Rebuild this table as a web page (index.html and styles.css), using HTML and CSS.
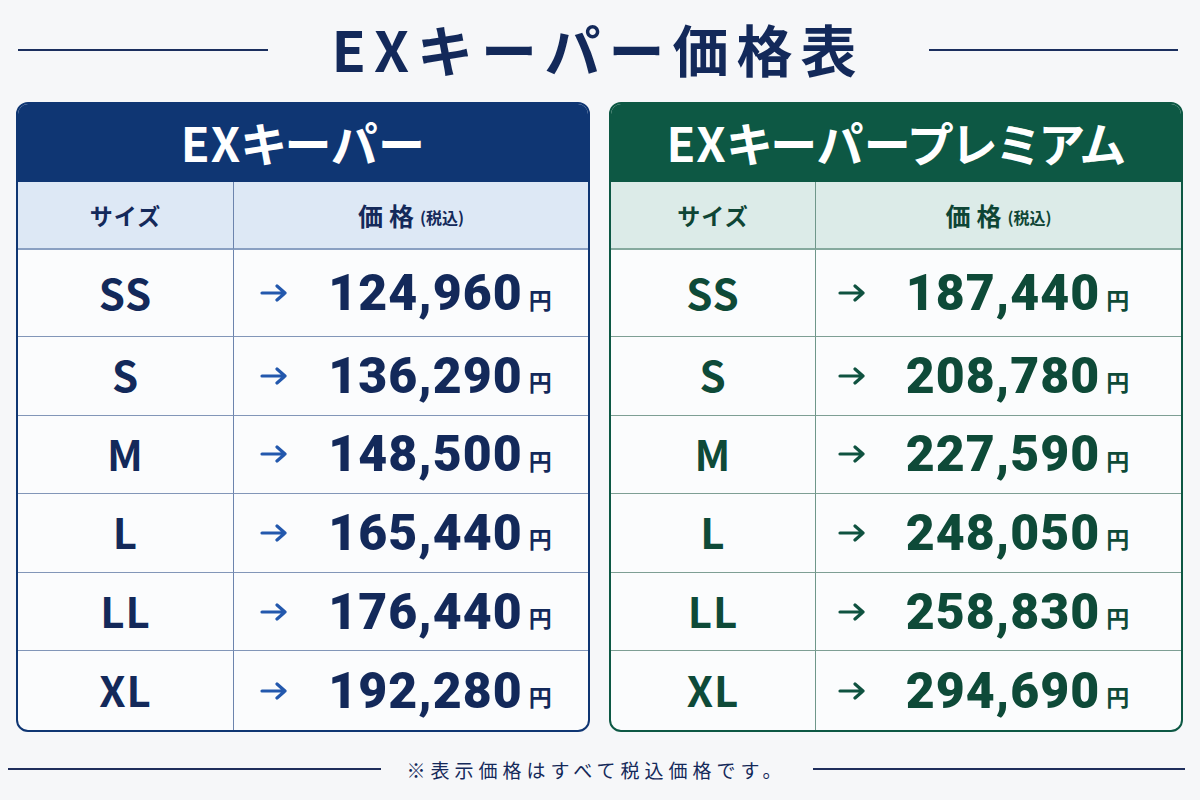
FILE: index.html
```html
<!DOCTYPE html>
<html lang="ja">
<head>
<meta charset="utf-8">
<title>EXキーパー価格表</title>
<link rel="stylesheet" href="styles.css">
</head>
<body>
<div class="page">
  <header class="title-row">
    <span class="rule"></span>
    <h1 class="title">EXキーパー価格表</h1>
    <span class="rule"></span>
  </header>

  <main class="cards">
    <section class="card blue">
      <div class="card-head">EXキーパー</div>
      <div class="grid">
        <div class="th">サイズ</div>
        <div class="th"><span class="th-main">価格</span><span class="th-sub">(税込)</span></div>

        <div class="size first">SS</div>
        <div class="price first"><svg class="arrow" viewBox="0 0 28 18"><path d="M2 9H25M17 2L25 9L17 16"/></svg><span class="num">124,960</span><span class="yen">円</span></div>
        <div class="size">S</div>
        <div class="price"><svg class="arrow" viewBox="0 0 28 18"><path d="M2 9H25M17 2L25 9L17 16"/></svg><span class="num">136,290</span><span class="yen">円</span></div>
        <div class="size">M</div>
        <div class="price"><svg class="arrow" viewBox="0 0 28 18"><path d="M2 9H25M17 2L25 9L17 16"/></svg><span class="num">148,500</span><span class="yen">円</span></div>
        <div class="size">L</div>
        <div class="price"><svg class="arrow" viewBox="0 0 28 18"><path d="M2 9H25M17 2L25 9L17 16"/></svg><span class="num">165,440</span><span class="yen">円</span></div>
        <div class="size">LL</div>
        <div class="price"><svg class="arrow" viewBox="0 0 28 18"><path d="M2 9H25M17 2L25 9L17 16"/></svg><span class="num">176,440</span><span class="yen">円</span></div>
        <div class="size last">XL</div>
        <div class="price last"><svg class="arrow" viewBox="0 0 28 18"><path d="M2 9H25M17 2L25 9L17 16"/></svg><span class="num">192,280</span><span class="yen">円</span></div>
      </div>
    </section>

    <section class="card green">
      <div class="card-head">EXキーパープレミアム</div>
      <div class="grid">
        <div class="th">サイズ</div>
        <div class="th"><span class="th-main">価格</span><span class="th-sub">(税込)</span></div>

        <div class="size first">SS</div>
        <div class="price first"><svg class="arrow" viewBox="0 0 28 18"><path d="M2 9H25M17 2L25 9L17 16"/></svg><span class="num">187,440</span><span class="yen">円</span></div>
        <div class="size">S</div>
        <div class="price"><svg class="arrow" viewBox="0 0 28 18"><path d="M2 9H25M17 2L25 9L17 16"/></svg><span class="num">208,780</span><span class="yen">円</span></div>
        <div class="size">M</div>
        <div class="price"><svg class="arrow" viewBox="0 0 28 18"><path d="M2 9H25M17 2L25 9L17 16"/></svg><span class="num">227,590</span><span class="yen">円</span></div>
        <div class="size">L</div>
        <div class="price"><svg class="arrow" viewBox="0 0 28 18"><path d="M2 9H25M17 2L25 9L17 16"/></svg><span class="num">248,050</span><span class="yen">円</span></div>
        <div class="size">LL</div>
        <div class="price"><svg class="arrow" viewBox="0 0 28 18"><path d="M2 9H25M17 2L25 9L17 16"/></svg><span class="num">258,830</span><span class="yen">円</span></div>
        <div class="size last">XL</div>
        <div class="price last"><svg class="arrow" viewBox="0 0 28 18"><path d="M2 9H25M17 2L25 9L17 16"/></svg><span class="num">294,690</span><span class="yen">円</span></div>
      </div>
    </section>
  </main>

  <footer class="note-row">
    <span class="rule"></span>
    <p class="note">※表示価格はすべて税込価格です。</p>
    <span class="rule"></span>
  </footer>
</div>
</body>
</html>
```

FILE: styles.css
```css
* { box-sizing: border-box; }

html, body {
  margin: 0;
  padding: 0;
  background: #f6f7f9;
}

body {
  width: 1200px;
  height: 800px;
  overflow: hidden;
  font-family: "Noto Sans CJK JP", "Noto Sans", sans-serif;
  color: #14295a;
}

.page {
  display: flex;
  flex-direction: column;
}

/* Title */
.title-row {
  display: flex;
  align-items: center;
  gap: 64px;
  padding: 0 22px 0 18px;
  height: 100px;
}

.title-row .rule {
  flex: 1;
  height: 2px;
  background: #1b2f5e;
}

.title {
  margin: 0;
  font-size: 56px;
  font-weight: 700;
  letter-spacing: 8px;
  line-height: 1;
  color: #13295a;
  padding-bottom: 4px;
}

/* Cards */
.cards {
  display: grid;
  grid-template-columns: 574px 574px;
  gap: 19px;
  padding: 2px 17px 0 16px;
}

.card {
  border: 2px solid;
  border-radius: 12px;
  overflow: hidden;
  background: #fbfcfd;
  height: 630px;
  display: flex;
  flex-direction: column;
}

.card.blue { border-color: #0f3673; }
.card.green { border-color: #0d5844; }

.card-head {
  height: 78px;
  display: flex;
  align-items: center;
  justify-content: center;
  color: #ffffff;
  font-size: 47px;
  font-weight: 700;
  letter-spacing: 1px;
  font-feature-settings: "palt" 1;
  line-height: 1;
  padding-bottom: 4px;
}

.blue .card-head { background: #0f3673; }
.green .card-head { background: #0d5844; }

.grid {
  display: grid;
  flex: 1;
  grid-template-rows: 68px 87px repeat(5, 1fr);
}

.blue .grid { grid-template-columns: 216px 1fr; }
.green .grid { grid-template-columns: 205px 1fr; }

.th {
  display: flex;
  align-items: center;
  justify-content: center;
  font-weight: 700;
  font-size: 23px;
  letter-spacing: 1px;
}

.blue .th { background: #dde8f5; color: #14295a; border-bottom: 2px solid #8aa0c2; }
.green .th { background: #dcebe8; color: #0e4535; border-bottom: 2px solid #86aa9e; }

.th:first-child { border-right: 1.5px solid; }
.blue .th:first-child { border-right-color: #6c84ad; }
.green .th:first-child { border-right-color: #6f978a; }

.th-main {
  font-size: 25px;
  letter-spacing: 6px;
}

.th-sub {
  font-size: 16px;
  letter-spacing: 0;
  margin-left: 0;
  padding-top: 3px;
}

.size, .price {
  display: flex;
  align-items: center;
  justify-content: center;
  font-weight: 700;
}

.blue .size, .blue .price { border-bottom: 1.5px solid #8296b8; color: #13295a; }
.green .size, .green .price { border-bottom: 1.5px solid #7e9f94; color: #0e4a38; }

.blue .size { border-right: 1.5px solid #6c84ad; }
.green .size { border-right: 1.5px solid #6f978a; }

.grid .last { border-bottom: none; }

.size {
  font-size: 42px;
  letter-spacing: 1px;
  padding-bottom: 4px;
}

.price {
  gap: 0;
  padding-right: 10px;
}

.green .price { padding-right: 30px; }

.arrow {
  width: 28px;
  height: 18px;
  margin-right: 40px;
  fill: none;
  stroke-width: 3.2;
  stroke-linecap: round;
  stroke-linejoin: round;
}

.blue .arrow { stroke: #2358ad; }
.green .arrow { stroke: #0f5240; }

.num {
  font-family: "Roboto", "Liberation Sans", sans-serif;
  font-weight: 900;
  font-size: 50px;
  letter-spacing: 1px;
  line-height: 1;
}

.yen {
  font-size: 23px;
  margin-left: 6px;
  padding-top: 12px;
  line-height: 1;
}

/* Footer */
.note-row {
  display: flex;
  align-items: center;
  gap: 26px;
  padding: 0 15px 0 8px;
  height: 74px;
}

.note-row .rule {
  flex: 1;
  height: 2px;
  background: #1f2e5c;
}

.note {
  margin: 0;
  font-size: 19px;
  letter-spacing: 5px;
  color: #14295a;
  font-weight: 400;
}
```
